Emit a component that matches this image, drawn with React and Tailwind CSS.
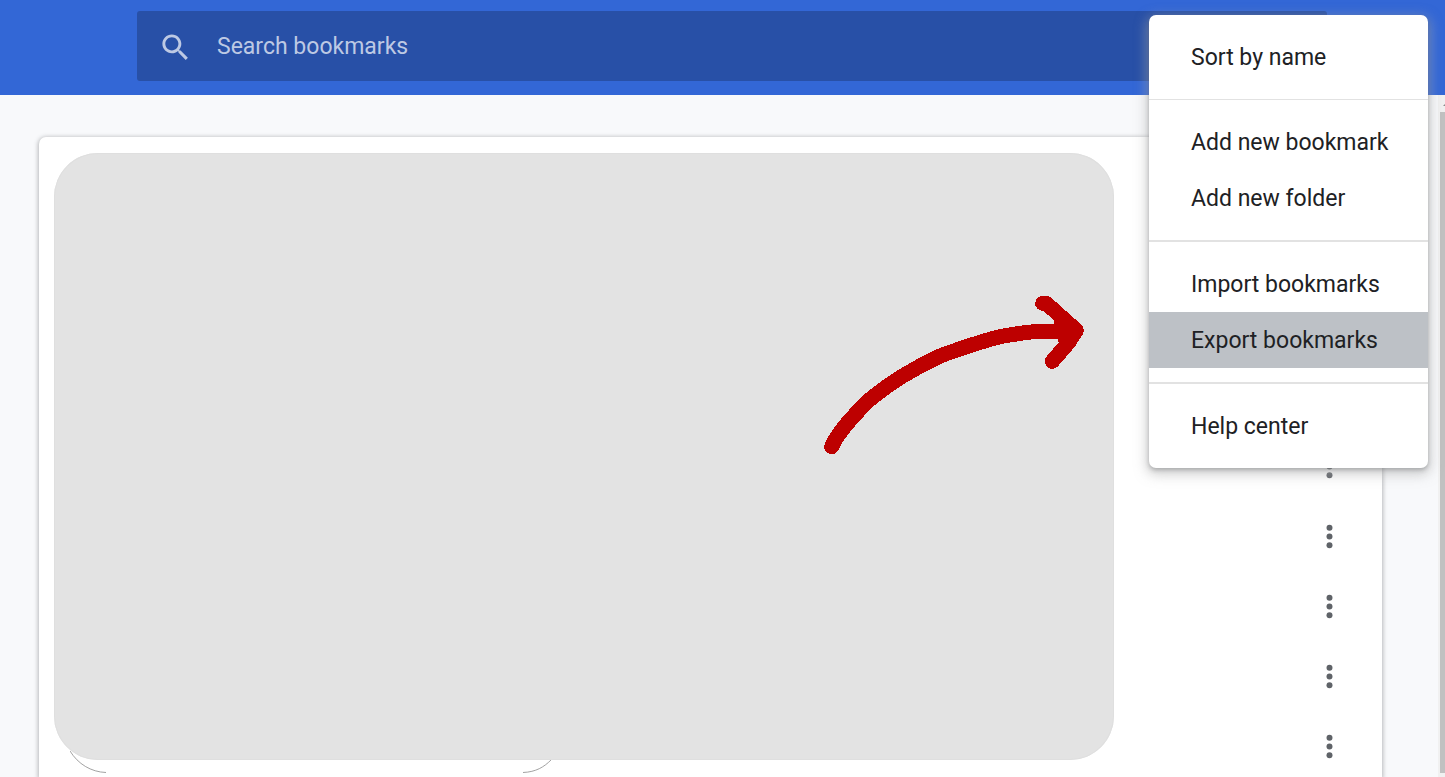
import React from "react";

const menuGroups = [
  ["Sort by name"],
  ["Add new bookmark", "Add new folder"],
  ["Import bookmarks", "Export bookmarks"],
  ["Help center"],
];

const dividers = ["", "border-t", "border-t-2", "border-t-2"];

const rows = [1, 2, 3, 4, 5, 6, 7, 8, 9];

function SearchIcon() {
  return (
    <svg viewBox="0 0 24 24" className="size-[35px] shrink-0 fill-[#bdc9e4]" aria-hidden="true">
      <path d="M15.5 14h-.79l-.28-.27C15.41 12.59 16 11.11 16 9.5 16 5.91 13.09 3 9.5 3S3 5.91 3 9.5 5.91 16 9.5 16c1.61 0 3.09-.59 4.23-1.57l.27.28v.79l5 4.99L20.49 19l-4.99-5zm-6 0C7.01 14 5 11.99 5 9.5S7.01 5 9.5 5 14 7.01 14 9.5 11.99 14 9.5 14z" />
    </svg>
  );
}

function MoreIcon() {
  return (
    <svg viewBox="0 0 24 24" className="size-[35px] fill-[#5f6368]" aria-hidden="true">
      <circle cx="12" cy="6" r="2.05" />
      <circle cx="12" cy="12" r="2.05" />
      <circle cx="12" cy="18" r="2.05" />
    </svg>
  );
}

function Arrow() {
  return (
    <svg
      viewBox="0 0 942 570"
      className="absolute top-[127px] right-0 h-[190px] w-[314px] fill-none stroke-[#bd0000]"
      strokeWidth="45"
      strokeLinecap="round"
      strokeLinejoin="round"
      shapeRendering="crispEdges"
      aria-hidden="true"
    >
      <path d="M95 500C112 460 150 418 205 362C265 312 345 262 425 226C490 203 540 184 610 168C650 162 690 154 725 154H826" />
      <path d="M728 70L740 71L829 151L806 187L757 244" />
      <path d="M785 125L826 152L795 175" />
    </svg>
  );
}

function Menu() {
  return (
    <div
      role="menu"
      className="absolute top-[15px] right-[17px] w-[279px] rounded-[7px] bg-white shadow-[0_2px_4px_rgba(60,64,67,0.3),0_4px_12px_3px_rgba(170,170,170,0.5)]"
    >
      {menuGroups.map((items, i) => (
        <div key={items[0]} className={`border-[#e2e2e2] py-[14px] ${dividers[i]}`}>
          {items.map((item) => (
            <button
              key={item}
              type="button"
              role="menuitem"
              className={`block h-14 w-full pt-[2px] pl-[42px] text-left whitespace-nowrap ${
                item === "Export bookmarks" ? "bg-[#bdc1c6]" : ""
              }`}
            >
              {item}
            </button>
          ))}
        </div>
      ))}
    </div>
  );
}

export default function App() {
  return (
    <div className="relative flex min-h-screen flex-col overflow-hidden bg-[#f8f9fb] font-['Roboto',sans-serif] text-[23px] leading-7 text-[#202124]">
      <header className="h-[95px] bg-[#3367d6] pt-[11px] pr-[118px] pl-[137px]">
        <label className="flex h-[70px] items-center gap-6 rounded-[3px] bg-[#2850a7] pt-[2px] pl-[21px]">
          <SearchIcon />
          <input
            type="search"
            aria-label="Search bookmarks"
            placeholder="Search bookmarks"
            className="min-w-0 flex-1 bg-transparent outline-none placeholder:text-[#bdc9e4]"
          />
        </label>
      </header>

      <div className="flex flex-1">
        <main className="flex flex-1 pt-[42px] pr-14 pl-[39px]">
          <div className="flex flex-1 rounded-t-[7px] bg-white pt-4 pr-[35px] pl-[15px] shadow-[0_1px_4px_1px_rgba(60,64,67,0.35)]">
            <div className="flex flex-1 flex-col">
              <div className="relative h-[607px] rounded-[44px] bg-[#e3e3e3] shadow-[inset_0_0_0_1px_#dfdfdf]">
                <Arrow />
              </div>
              <svg
                viewBox="0 0 500 24"
                className="-mt-[10px] ml-4 h-6 w-[500px] fill-none stroke-[#8a8a8a]"
                strokeWidth="0.8"
                aria-hidden="true"
              >
                <path d="M0 1C8 14 21 22 36 22.5M453 22.5C466 22 474 17 481 10" />
              </svg>
            </div>
            <div className="ml-[198px] flex flex-col gap-[35px] pt-4">
              {rows.map((row) => (
                <button key={row} type="button" aria-label="More actions" className="block">
                  <MoreIcon />
                </button>
              ))}
            </div>
          </div>
        </main>

        <div className="flex w-[7px] flex-col bg-[#f1f1f1] pb-1 pl-[2px]" aria-hidden="true">
          <svg viewBox="0 0 5 17" className="h-[17px] w-[5px] fill-[#8b8b8b]">
            <path d="M3 11L7 7V11Z" />
          </svg>
          <div className="flex-1 bg-[#c1c1c1]" />
        </div>
      </div>

      <Menu />
    </div>
  );
}
